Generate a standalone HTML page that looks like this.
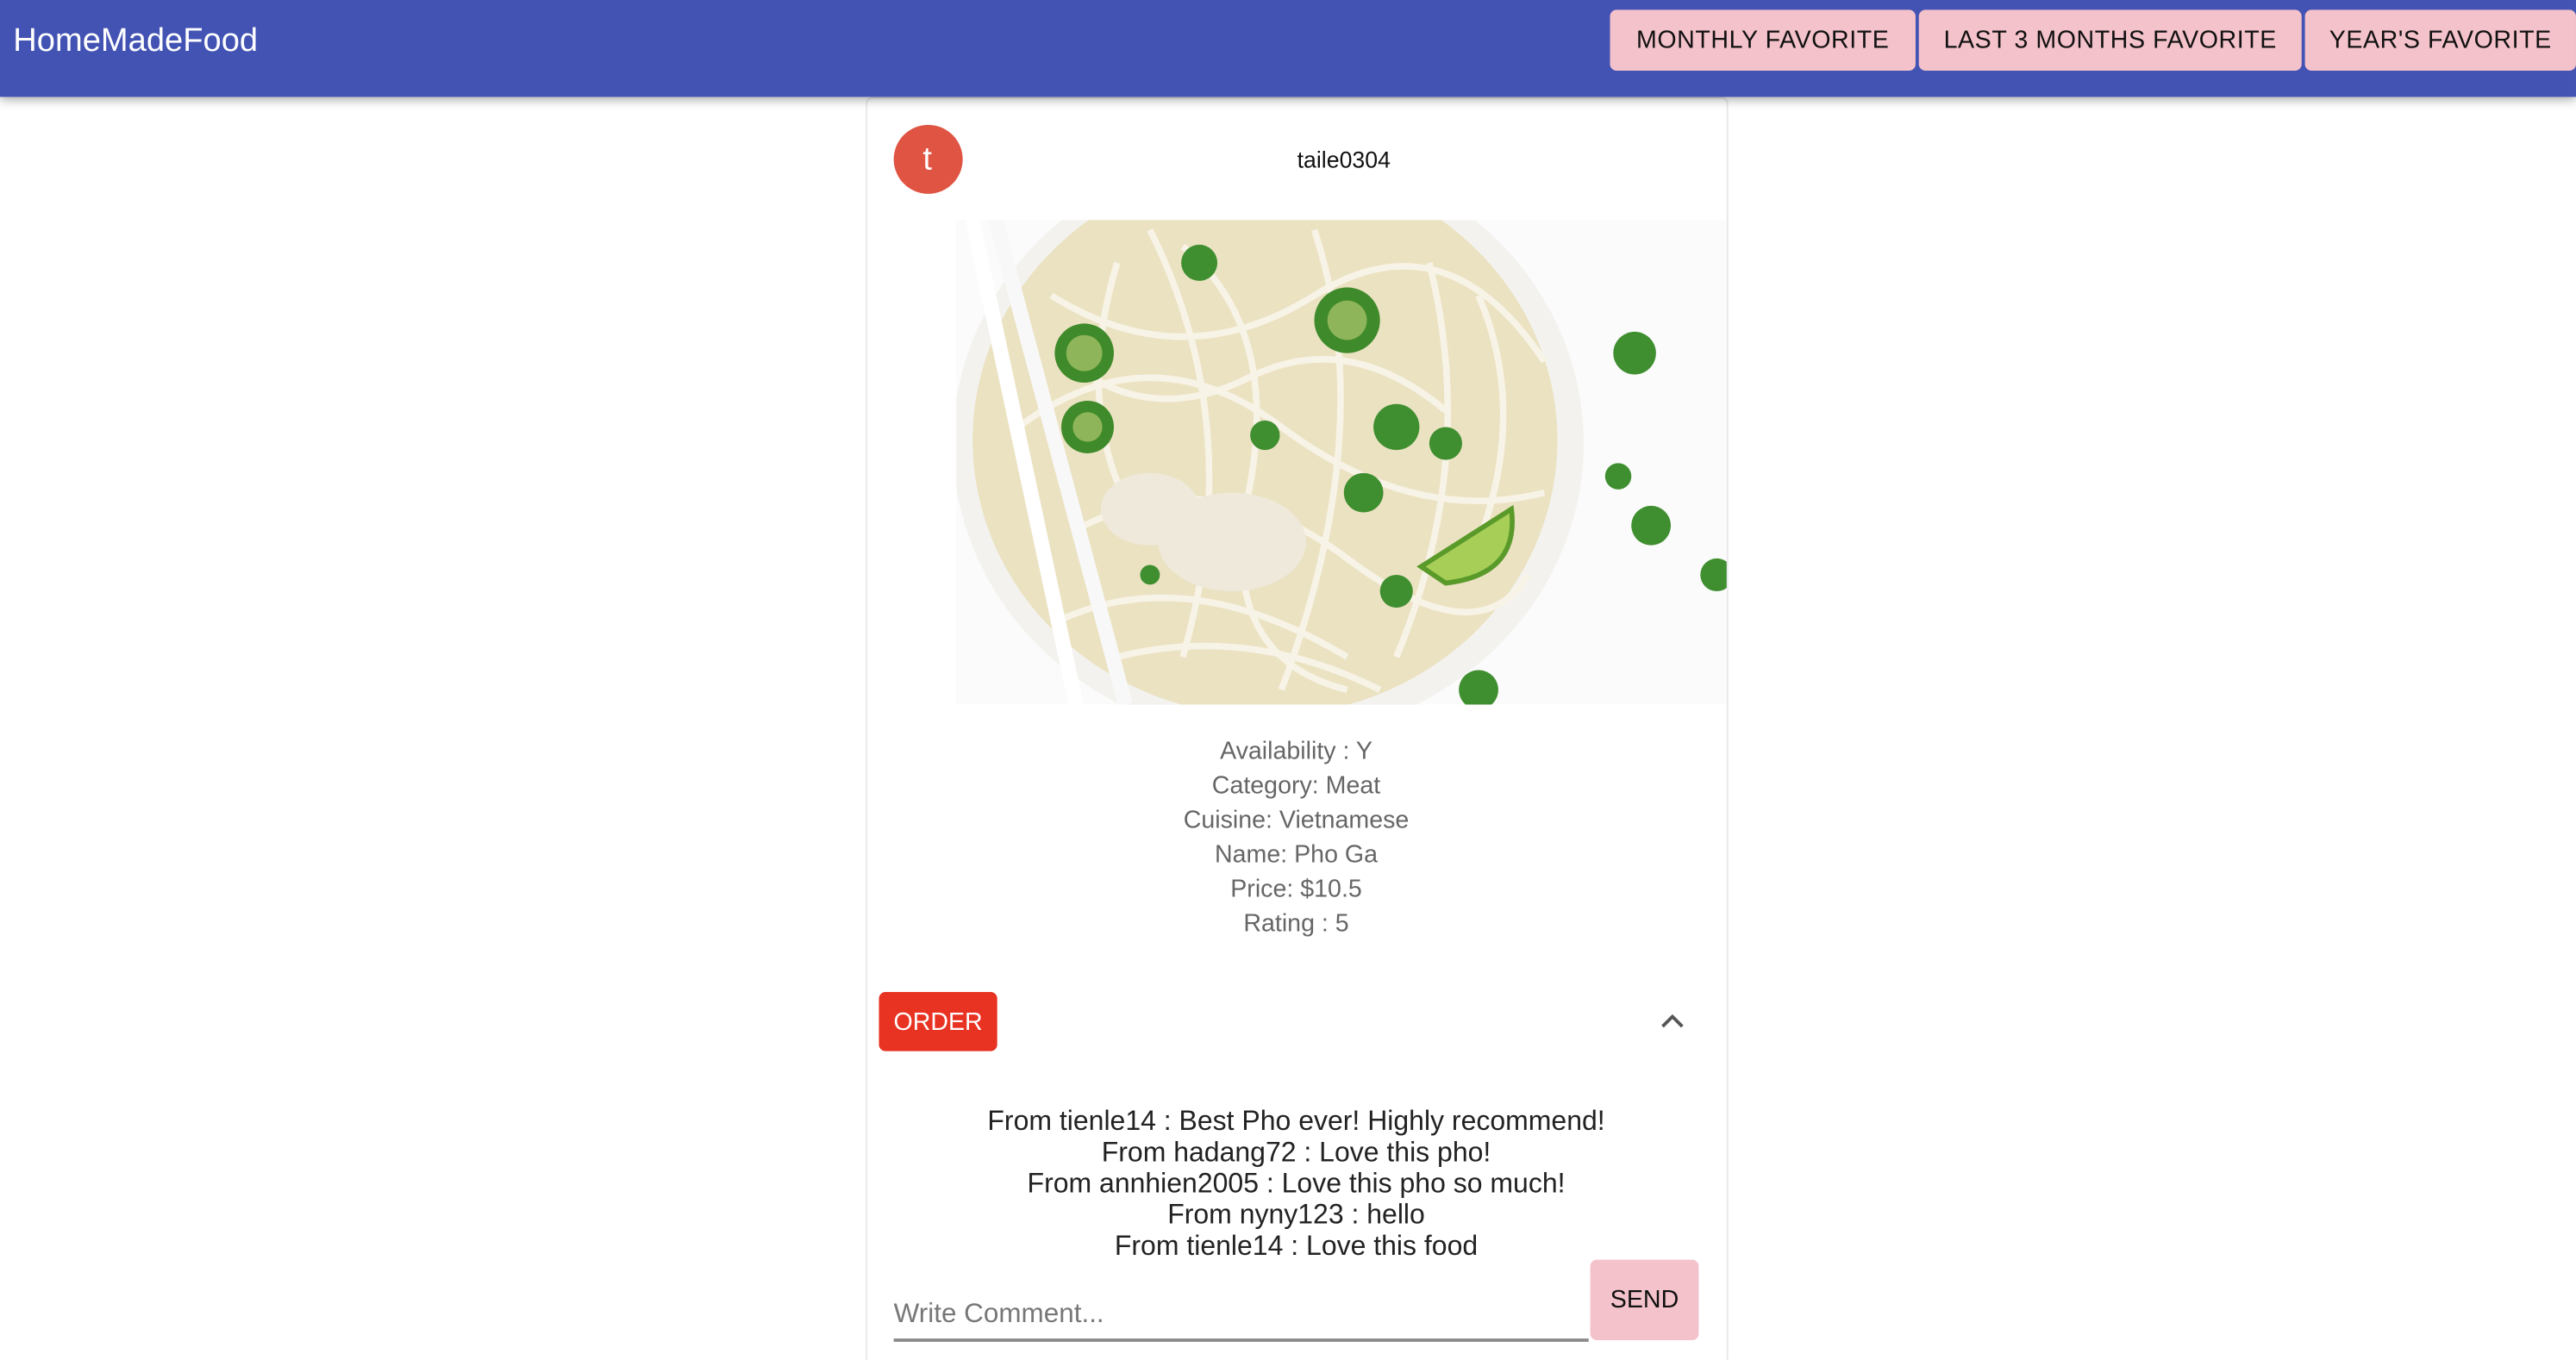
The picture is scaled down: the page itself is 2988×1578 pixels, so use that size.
<!DOCTYPE html>
<html><head><meta charset="utf-8"><style>
html,body{margin:0;padding:0;background:#fff;overflow:hidden;width:2988px;height:1578px}
#w{position:absolute;left:0;top:0;width:1568px;height:828px;overflow:hidden;transform:scale(1.90561);transform-origin:0 0;font-family:"Liberation Sans",Arial,sans-serif}
.hdr{position:absolute;left:0;top:0;width:1568px;height:59px;background:#4353b3;box-shadow:0 2px 6px rgba(0,0,0,.35);z-index:2}
.title{position:absolute;left:8px;top:14px;color:#fff;font-size:20px}
.btn{position:absolute;top:6px;height:37px;background:#f4c2cb;border-radius:4px;color:#111;font-size:15px;display:flex;align-items:center;justify-content:center;letter-spacing:.3px}
.card{position:absolute;left:527px;top:59px;width:523px;height:780px;border:1px solid #e8e8e8;border-radius:4px;background:#fff}
.av{position:absolute;left:543.5px;top:75.5px;width:42px;height:42px;border-radius:50%;background:#e05443;color:#fff;font-size:20px;text-align:center;line-height:42px}
.t{position:absolute;text-align:center;white-space:nowrap}
</style></head><body><div id="w">
<div class="hdr"><div class="title">HomeMadeFood</div>
<div class="btn" style="left:980px;width:186px">MONTHLY FAVORITE</div>
<div class="btn" style="left:1168px;width:233px">LAST 3 MONTHS FAVORITE</div>
<div class="btn" style="left:1403px;width:165px">YEAR'S FAVORITE</div>
</div>
<div class="card"></div>
<div class="av">t</div>
<div class="t" style="left:718px;width:200px;top:89px;font-size:14px;color:#111">taile0304</div>
<svg style="position:absolute;left:582px;top:134px" width="469" height="295" viewBox="582 134 469 295">
<rect x="582" y="134" width="469" height="295" fill="#fbfbfb"/>
<ellipse cx="772" cy="270" rx="192" ry="180" fill="#f3f2ee"/>
<ellipse cx="770" cy="268" rx="178" ry="168" fill="#ebe2c2"/>
<g stroke="#f7f3e6" stroke-width="4" fill="none">
<path d="M640 180 Q720 230 800 180 T940 220"/><path d="M620 260 Q700 200 780 260 T940 300"/>
<path d="M660 320 Q740 280 820 340 T930 350"/><path d="M700 140 Q760 260 720 400"/>
<path d="M800 140 Q840 260 780 420"/><path d="M870 160 Q900 280 850 400"/>
<path d="M640 380 Q720 340 820 400"/><path d="M680 160 Q650 260 700 330"/>
<path d="M720 150 Q780 200 760 300 T820 420"/><path d="M900 180 Q930 250 900 330"/>
<path d="M650 220 Q700 260 760 230 T880 250"/><path d="M680 400 Q760 380 840 420"/>
</g>
<ellipse cx="750" cy="330" rx="45" ry="30" fill="#efe9db"/>
<ellipse cx="700" cy="310" rx="30" ry="22" fill="#efe9db"/>
<g fill="#3f8a2a"><circle cx="660" cy="215" r="18"/><circle cx="662" cy="260" r="16"/><circle cx="820" cy="195" r="20"/></g>
<g fill="#8fb55a"><circle cx="660" cy="215" r="11"/><circle cx="662" cy="260" r="9"/><circle cx="820" cy="195" r="12"/></g>
<g fill="#3f8f30"><circle cx="850" cy="260" r="14"/><circle cx="830" cy="300" r="12"/><circle cx="880" cy="270" r="10"/><circle cx="730" cy="160" r="11"/><circle cx="770" cy="265" r="9"/><circle cx="850" cy="360" r="10"/><circle cx="995" cy="215" r="13"/><circle cx="1005" cy="320" r="12"/><circle cx="985" cy="290" r="8"/><circle cx="1045" cy="350" r="10"/><circle cx="900" cy="420" r="12"/><circle cx="700" cy="350" r="6"/></g>
<path d="M865 345 L920 310 Q925 350 880 355Z" fill="#a7cf58" stroke="#5a9a2a" stroke-width="3"/>
<path d="M592 134 L655 429" stroke="#fff" stroke-width="9"/><path d="M606 134 L685 429" stroke="#f8f8f8" stroke-width="9"/>
</svg>
<div class="t" style="left:589px;width:400px;top:447px;font-size:15px;line-height:21px;color:#666">Availability : Y<br>Category: Meat<br>Cuisine: Vietnamese<br>Name: Pho Ga<br>Price: $10.5<br>Rating : 5</div>
<div style="position:absolute;left:535px;top:604px;width:72px;height:36px;background:#e83323;border-radius:4px;color:#fff;font-size:15px;line-height:37px;text-align:center">ORDER</div>
<svg style="position:absolute;left:1010px;top:615px" width="16" height="14"><path d="M2 10 L8 4 L14 10" stroke="#555" stroke-width="2" fill="none"/></svg>
<div class="t" style="left:489px;width:600px;top:673px;font-size:16.8px;line-height:19px;color:#222">From tienle14 : Best Pho ever! Highly recommend!<br>From hadang72 : Love this pho!<br>From annhien2005 : Love this pho so much!<br>From nyny123 : hello<br>From tienle14 : Love this food</div>
<div style="position:absolute;left:544px;top:791px;font-size:16.5px;color:#777">Write Comment...</div>
<div style="position:absolute;left:544px;top:815px;width:423px;height:2px;background:#8a8a8a"></div>
<div style="position:absolute;left:968px;top:767px;width:66px;height:49px;background:#f4c2cb;border-radius:4px;color:#111;font-size:15px;line-height:50px;text-align:center">SEND</div>
</div></body></html>
